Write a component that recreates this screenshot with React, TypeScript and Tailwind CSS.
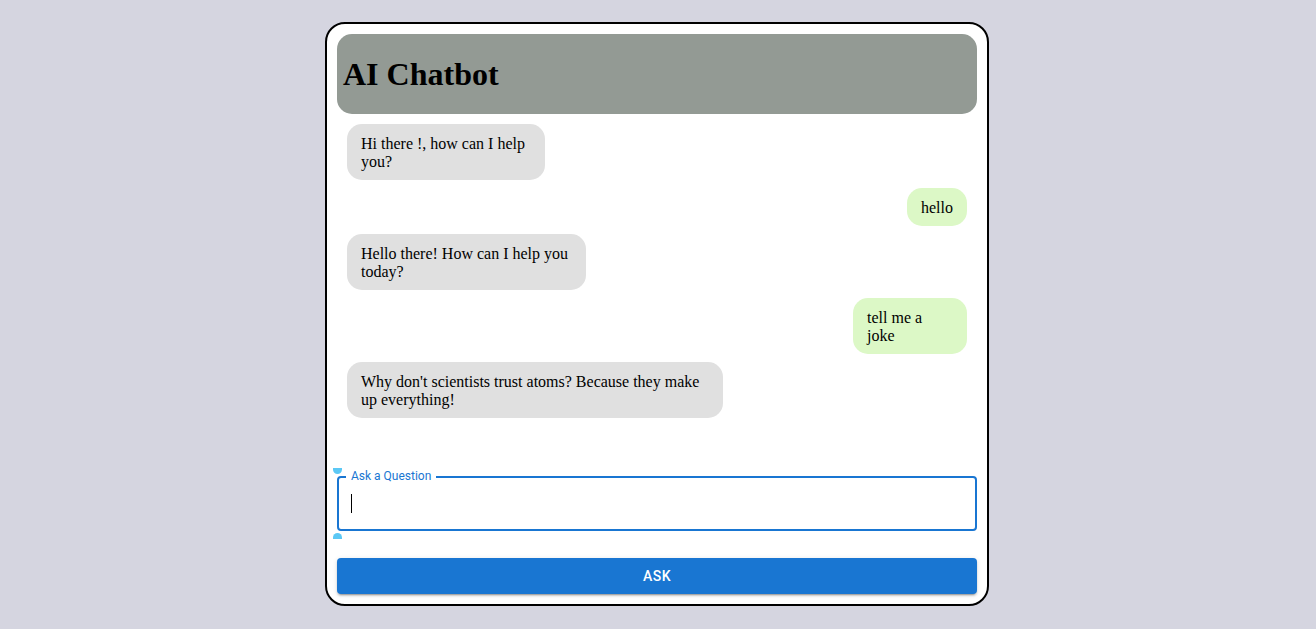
import React from 'react';

type Msg = { from: 'bot' | 'user'; text: string; w: string };

const messages: Msg[] = [
  { from: 'bot', text: 'Hi there !, how can I help you?', w: 'w-[198px]' },
  { from: 'user', text: 'hello', w: 'w-[60px]' },
  { from: 'bot', text: 'Hello there! How can I help you today?', w: 'w-[239px]' },
  { from: 'user', text: 'tell me a joke', w: 'w-[114px]' },
  { from: 'bot', text: "Why don't scientists trust atoms? Because they make up everything!", w: 'w-[376px]' },
];

function Bubble({ msg }: { msg: Msg }) {
  const isBot = msg.from === 'bot';
  return (
    <div className={`flex ${isBot ? 'justify-start pl-[10px]' : 'justify-end pr-[10px]'}`}>
      <div
        className={`${msg.w} rounded-[15px] px-[14px] pb-[9px] pt-[11px] text-[16px] leading-[18px] text-black ${
          isBot ? 'bg-[#e0e0e0]' : 'bg-[#dcf8c6]'
        }`}
      >
        {msg.text}
      </div>
    </div>
  );
}

export default function App() {
  return (
    <div className="flex min-h-[629px] w-full bg-[#d5d5e0] pl-[325px] pt-[22px] font-['Liberation_Serif',serif]">
      <div className="flex h-[584px] w-[664px] flex-col rounded-[20px] border-2 border-black bg-white p-[10px]">
        <div className="flex h-[80px] items-center rounded-[15px] bg-[#939a94] px-[6px]">
          <h1 className="text-[32px] font-bold text-black">AI Chatbot</h1>
        </div>

        <div className="flex h-[362px] flex-col gap-[8px] pt-[10px]">
          {messages.map((m, i) => (
            <Bubble key={i} msg={m} />
          ))}
        </div>

        <div className="relative h-[55px] rounded-[4px] border-2 border-[#1976d2]">
          <span className="absolute -top-[9px] left-[7px] bg-white px-[5px] font-['Roboto',sans-serif] text-[12px] leading-[14px] text-[#1976d2]">
            Ask a Question
          </span>
          <div className="ml-[12px] mt-[16px] h-[19px] w-px bg-black" />
          <span className="absolute -left-[6px] -top-[10px] h-[6px] w-[9px] rounded-b-full bg-[#5bc8f5]" />
          <span className="absolute -bottom-[10px] -left-[6px] h-[6px] w-[9px] rounded-t-full bg-[#5bc8f5]" />
        </div>

        <button className="mt-[27px] h-[36px] w-full rounded-[4px] bg-[#1976d2] font-['Roboto',sans-serif] text-[14px] font-medium tracking-[0.4px] text-white shadow-[0_3px_1px_-2px_rgba(0,0,0,0.2),0_2px_2px_0_rgba(0,0,0,0.14),0_1px_5px_0_rgba(0,0,0,0.12)]">
          ASK
        </button>
      </div>
    </div>
  );
}
